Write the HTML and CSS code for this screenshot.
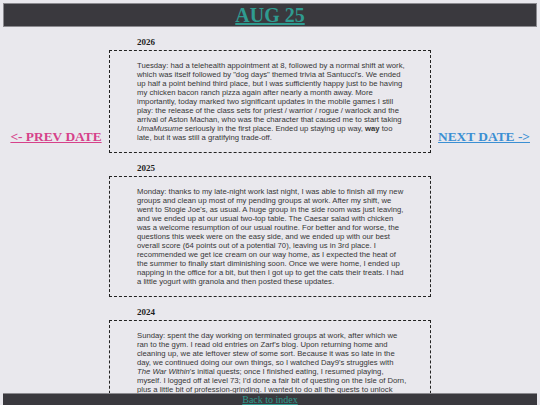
FILE: index.html
```html
<!DOCTYPE html>
<html lang="en">
<head>
<meta charset="utf-8">
<title>Aug 25</title>
<link rel="stylesheet" href="styles.css">
</head>
<body>
<header class="masthead">
  <a class="masthead__title" href="#">AUG 25</a>
</header>

<div class="layout">
  <nav class="side">
    <a class="date-link date-link--prev" href="#">&lt;- PREV DATE</a>
  </nav>

  <main class="entries">
    <section class="entry">
      <h3 class="entry__year">2026</h3>
      <div class="entry__body">
        <p>Tuesday: had a telehealth appointment at 8, followed by a normal shift at work, which was itself followed by "dog days" themed trivia at Santucci's. We ended up half a point behind third place, but I was sufficiently happy just to be having my chicken bacon ranch pizza again after nearly a month away. More importantly, today marked two significant updates in the mobile games I still play: the release of the class sets for priest / warrior / rogue / warlock and the arrival of Aston Machan, who was the character that caused me to start taking <em>UmaMusume</em> seriously in the first place. Ended up staying up way, <strong>way</strong> too late, but it was still a gratifying trade-off.</p>
      </div>
    </section>

    <section class="entry">
      <h3 class="entry__year">2025</h3>
      <div class="entry__body">
        <p>Monday: thanks to my late-night work last night, I was able to finish all my new groups and clean up most of my pending groups at work. After my shift, we went to Stogie Joe's, as usual. A huge group in the side room was just leaving, and we ended up at our usual two-top table. The Caesar salad with chicken was a welcome resumption of our usual routine. For better and for worse, the questions this week were on the easy side, and we ended up with our best overall score (64 points out of a potential 70), leaving us in 3rd place. I recommended we get ice cream on our way home, as I expected the heat of the summer to finally start diminishing soon. Once we were home, I ended up napping in the office for a bit, but then I got up to get the cats their treats. I had a little yogurt with granola and then posted these updates.</p>
      </div>
    </section>

    <section class="entry">
      <h3 class="entry__year">2024</h3>
      <div class="entry__body">
        <p>Sunday: spent the day working on terminated groups at work, after which we ran to the gym. I read old entries on Zarf's blog. Upon returning home and cleaning up, we ate leftover stew of some sort. Because it was so late in the day, we continued doing our own things, so I watched Day9's struggles with <em>The War Within</em>'s initial quests; once I finished eating, I resumed playing, myself. I logged off at level 73; I'd done a fair bit of questing on the Isle of Dorn, plus a little bit of profession-grinding. I wanted to do all the quests to unlock everything in the new zone, but I ran out of steam well before that.</p>
      </div>
    </section>
  </main>

  <nav class="side">
    <a class="date-link date-link--next" href="#">NEXT DATE -&gt;</a>
  </nav>
</div>

<footer class="footer">
  <a class="footer__link" href="#">Back to index</a>
</footer>
</body>
</html>
```

FILE: styles.css
```css
body {
  margin: 3px;
  background: #e9e8ed;
  font-family: "Liberation Serif", "Times New Roman", serif;
}

/* top title bar */
.masthead {
  box-sizing: border-box;
  height: 24px;
  border: 1px solid #8b8a8f;
  background: #3a393e;
  text-align: center;
  font-size: 20px;
  line-height: 22px;
}

.masthead__title {
  font-weight: bold;
  color: #2f9b90;
}

/* three columns: prev link, entries, next link */
.layout {
  display: grid;
  grid-template-columns: 106px 322px 106px;
  padding-bottom: 20px;
}

.side {
  text-align: center;
  padding-top: 102px;
  font-size: 13.4px;
  line-height: 15px;
}

.date-link {
  font-weight: bold;
}

.date-link--prev {
  color: #d6418a;
}

.date-link--next {
  color: #3b8fd3;
}

/* one dated entry per year */
.entry__year {
  margin: 10px 0 3px 28px;
  font-size: 9px;
  line-height: 10px;
  font-weight: bold;
  color: #1e1e1e;
}

.entry__body {
  border: 1px dashed #222;
  padding: 10px 23px 10px 27px;
  font-family: "Liberation Sans", Arial, sans-serif;
  font-size: 7.69px;
  line-height: 9px;
  color: #363636;
}

.entry__body p {
  margin: 0;
}

/* bar pinned to the bottom of the window */
.footer {
  position: fixed;
  left: 3px;
  right: 3px;
  bottom: 0;
  height: 11px;
  border-top: 1px solid #8b8a8f;
  background: #3a393e;
  text-align: center;
  font-size: 10px;
  line-height: 11px;
}

.footer__link {
  color: #2f9b90;
}
```
